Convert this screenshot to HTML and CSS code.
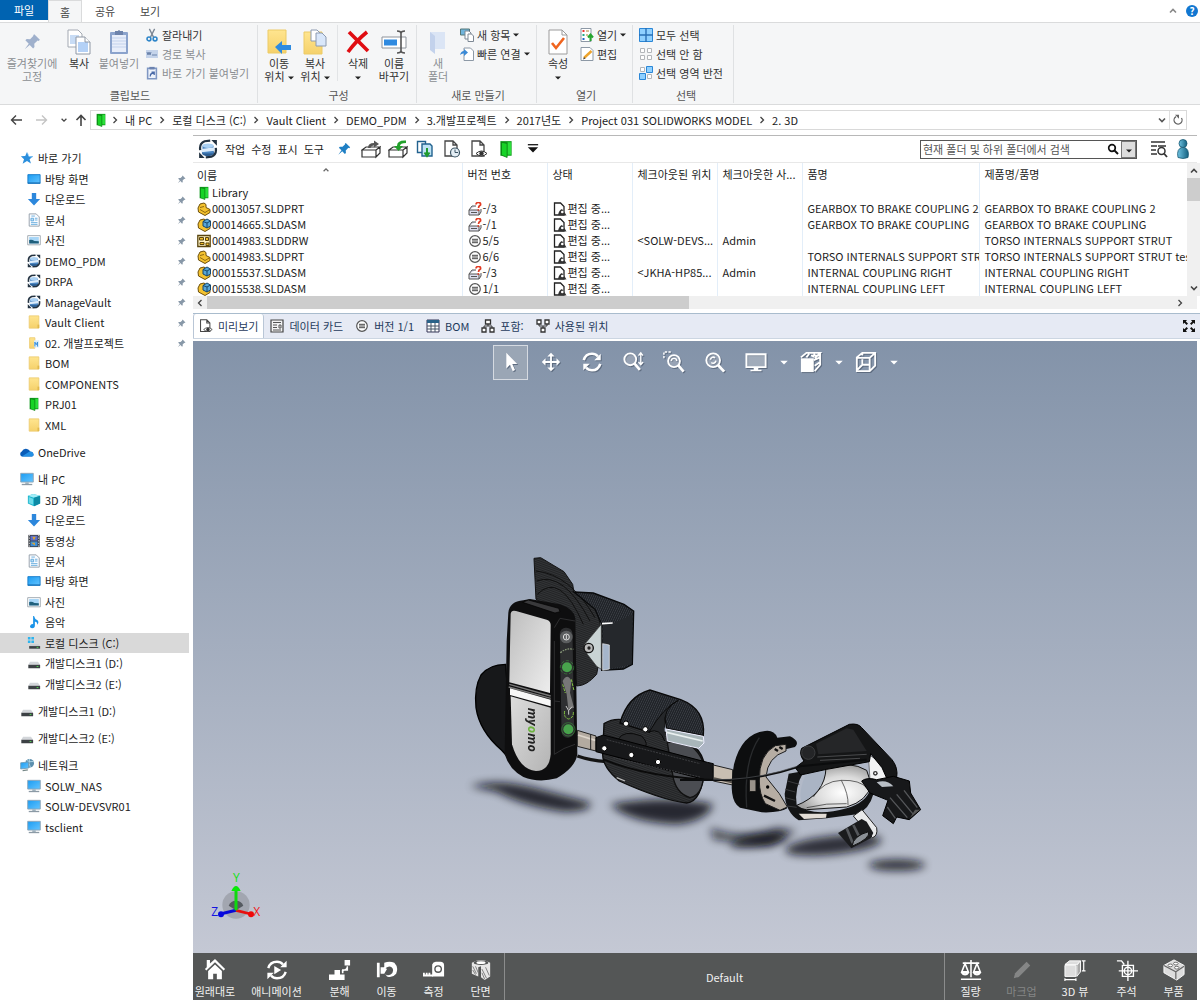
FILE: index.html
```html
<!DOCTYPE html>
<html lang="ko">
<head>
<meta charset="utf-8">
<title>2. 3D</title>
<link rel="stylesheet" href="styles.css">
</head>
<body>
<svg class="sprite" aria-hidden="true">
  <defs>
    <linearGradient id="sky" x1="0" y1="0" x2="1" y2="1"><stop offset="0" stop-color="#1b9cf2"/><stop offset="1" stop-color="#64c4ff"/></linearGradient>
    <linearGradient id="fold" x1="0" y1="0" x2="0" y2="1"><stop offset="0" stop-color="#ffe58f"/><stop offset="1" stop-color="#f5d16b"/></linearGradient>
    <linearGradient id="person" x1="0" y1="0" x2="1" y2="0"><stop offset="0" stop-color="#6fc3e2"/><stop offset="1" stop-color="#14607f"/></linearGradient>
  </defs>
  <symbol id="pin" viewBox="0 0 16 16"><path d="M10 1l5 5-1 1-1-.4-3 3 .2 2.9-1.2 1.2-3-3L1.500 14.500l3.600-5-3-3 1.200-1.200 3 .200 3-3L9 2z" fill="currentColor"/></symbol>
  <symbol id="copy" viewBox="0 0 24 26"><path d="M1 1h10l4 4v13H1z" fill="#fff" stroke="#a3a9b2"/><path d="M3 6h9v9H3z" fill="#c8dcf5"/><path d="M9 8h9l5 5v12H9z" fill="#fff" stroke="#8f98a5"/><path d="M11 13h10v10H11z" fill="#b4d1f6"/><path d="M18 8v5h5" fill="#fff" stroke="#8f98a5"/></symbol>
  <symbol id="paste" viewBox="0 0 20 26"><rect x="1" y="3" width="18" height="22" rx="1" fill="#8ba3cc"/><path d="M3 6h14v17H3z" fill="#e8eefa"/><path d="M3 9h14M3 12h14M3 15h14M3 18h14" stroke="#c3d2ec"/><path d="M6 2h3q1-2 2 0h3v4H6z" fill="#6d83ab"/></symbol>
  <symbol id="cut" viewBox="0 0 14 16"><path d="M4 1l5 10M10 1L5 11" stroke="#7b8794" stroke-width="1.500" fill="none"/><circle cx="3.500" cy="12.500" r="2.200" fill="none" stroke="#2f86c9" stroke-width="1.800"/><circle cx="10.500" cy="12.500" r="2.200" fill="none" stroke="#2f86c9" stroke-width="1.800"/></symbol>
  <symbol id="path" viewBox="0 0 14 14"><path d="M1 3h12v8H1z" fill="#c4d3ea"/><path d="M2 5l1 3 1-3 1 3 1-3M7 8h5" stroke="#6b83ab" fill="none"/></symbol>
  <symbol id="lnkpaste" viewBox="0 0 14 16"><path d="M2 2.500h10v12H2z" fill="#eef3fb" stroke="#7f97c3" stroke-width="1.800"/><path d="M4 1h6v3H4z" fill="#6c83b0"/><path d="M5 12q0-4 4-4M6.500 7H9.500v3.200" stroke="#4a6ba8" stroke-width="1.500" fill="none"/></symbol>
  <symbol id="moveto" viewBox="0 0 24 26"><path d="M1 1h18v23H1z" fill="url(#fold)" stroke="#eccb66"/><path d="M8 18l7-6v4h9v5h-9v4z" fill="#2e8be0"/></symbol>
  <symbol id="copyto" viewBox="0 0 24 26"><path d="M1 3h18v22H1z" fill="url(#fold)" stroke="#eccb66"/><path d="M8 1h6l3 3v8H8z" fill="#fff" stroke="#8c9ab0"/><path d="M13 4h6l4 4v9H13z" fill="#d9e7fa" stroke="#8c9ab0"/></symbol>
  <symbol id="del" viewBox="0 0 24 26"><path d="M3 3q9 9 19 19M21 3Q10 12 2 23" stroke="#e00d12" stroke-width="3.600" fill="none"/></symbol>
  <symbol id="rename" viewBox="0 0 26 26"><path d="M1 8h24v11H1z" fill="#fff" stroke="#8d939b"/><path d="M3 10.500h13v6H3z" fill="#2f8ae0"/><path d="M16 2q4 0 4 2.500v17q0 2.500-4 2.500M24 2q-4 0-4 2.500M24 24q-4 0-4-2.500" fill="none" stroke="#555" stroke-width="1.600"/></symbol>
  <symbol id="newfolder" viewBox="0 0 18 26"><path d="M1 3h15v17H1z" fill="#dbe5f5"/><path d="M1 3l5 4v18l-5-4z" fill="#c3d2ec"/></symbol>
  <symbol id="newitem" viewBox="0 0 14 14"><path d="M.5 1h9v6h-9z" fill="#6fb4dc" stroke="#577"/><path d="M5 3h4l2 2v6H5z" fill="#fff" stroke="#7d8894"/><path d="M8 6h3.500l2 2v5.500H8z" fill="#fff" stroke="#7d8894"/></symbol>
  <symbol id="quick" viewBox="0 0 14 14"><path d="M4 1h6.500l3 3v9.500H4z" fill="#fff" stroke="#8d99a6"/><path d="M0 8q1-4 4-4V2l4 3.500L4 9V6.500Q2 6 0 8z" fill="#3b8ad6"/></symbol>
  <symbol id="props" viewBox="0 0 20 26"><path d="M1 1h13l5 5v19H1z" fill="#fff" stroke="#9b9b9b"/><path d="M14 1v5h5" fill="none" stroke="#9b9b9b"/><path d="M4 14l4 5 8-10" stroke="#f0641e" stroke-width="2.600" fill="none"/></symbol>
  <symbol id="open" viewBox="0 0 14 14"><path d="M1 .5h10v13H1z" fill="#fff" stroke="#8d99a6"/><path d="M2.500 2h2v2h-2z" fill="#e33"/><path d="M2.500 6h2v2h-2z" fill="#2a8"/><path d="M2.500 10h2v2h-2z" fill="#26c"/><path d="M6 3h3M6 7h2" stroke="#b08030"/><path d="M10.500 13V7M8 9.500L10.500 6.500 13 9.500" stroke="#25a52e" stroke-width="2" fill="none"/></symbol>
  <symbol id="edit" viewBox="0 0 14 14"><path d="M1 .5h9l3 3v10H1z" fill="#fff" stroke="#8d99a6"/><path d="M4 11L11.500 4" stroke="#eca32c" stroke-width="2.400"/><path d="M3 12.500l1-2.500 1.500 1.500z" fill="#444"/></symbol>
  <symbol id="selall" viewBox="0 0 14 14"><path d="M.5 .5h13v13H.5z" fill="#8fd0ff" stroke="#2a86d6"/><path d="M7 0v14M0 7h14" stroke="#2a6fb5" stroke-width="1.400"/></symbol>
  <symbol id="selnone" viewBox="0 0 14 14"><path d="M1.500 1.500h4v4h-4zM8.500 1.500h4v4h-4zM1.500 8.500h4v4h-4zM8.500 8.500h4v4h-4z" fill="#fff" stroke="#b3b6ba"/></symbol>
  <symbol id="selinv" viewBox="0 0 14 14"><path d="M1.500 1.500h4v4h-4zM8.500 8.500h4v4h-4z" fill="#fff" stroke="#b3b6ba"/><path d="M7.500 .5h6v6h-6zM.5 7.500h6v6h-6z" fill="#8fd0ff" stroke="#2a86d6"/></symbol>
  <symbol id="chev-r" viewBox="0 0 6 8"><path d="M1.500 1l3 3-3 3" fill="none" stroke="currentColor" stroke-width="1.300"/></symbol>
  <symbol id="chev-d" viewBox="0 0 10 10"><path d="M2 3.500l3 3 3-3" fill="none" stroke="currentColor" stroke-width="1.600"/></symbol>
  <symbol id="chev-u" viewBox="0 0 10 10"><path d="M2 6.500l3-3 3 3" fill="none" stroke="currentColor" stroke-width="1.600"/></symbol>
  <symbol id="arr-l" viewBox="0 0 12 12"><path d="M6 1.500L1.500 6 6 10.500M1.500 6H12" fill="none" stroke="currentColor" stroke-width="1.400"/></symbol>
  <symbol id="arr-r" viewBox="0 0 12 12"><path d="M6 1.500L10.500 6 6 10.500M10.500 6H0" fill="none" stroke="currentColor" stroke-width="1.400"/></symbol>
  <symbol id="arr-u" viewBox="0 0 12 12"><path d="M1.500 6L6 1.500 10.500 6M6 1.500V12" fill="none" stroke="currentColor" stroke-width="1.600"/></symbol>
  <symbol id="tri" viewBox="0 0 6 4"><path d="M0 .5h6L3 3.500z" fill="currentColor"/></symbol>
  <symbol id="reload" viewBox="0 0 12 12"><path d="M9.500 4A4 4 0 1 1 4 2.600" fill="none" stroke="#666" stroke-width="1.300"/><path d="M3 .8h4v4z" fill="#666"/></symbol>
  <symbol id="greenf" viewBox="0 0 14 16"><path d="M2 1h10v13H2z" fill="#0f9a1b"/><path d="M3 2l5 1v12.500l-5-2z" fill="#17d326" stroke="#0a7a12" stroke-width=".7"/><path d="M8.500 2h3v11h-3z" fill="#2be03a"/></symbol>
  <symbol id="star" viewBox="0 0 16 16"><path d="M8 1l2 4.800 5 .200-4 3.300 1.500 5L8 11.500l-5 3 1.600-5L1 6l5-.2z" fill="#2b8fdd"/><path d="M9 3l1 3 4 1" stroke="#9bd2fb" fill="none"/></symbol>
  <symbol id="desk" viewBox="0 0 16 16"><path d="M1 3h14v10H1z" fill="url(#sky)" stroke="#1479c8"/><path d="M1 12.500h14" stroke="#1367ad"/></symbol>
  <symbol id="down" viewBox="0 0 16 16"><path d="M5.500 1h5v7H15l-7 7.500L1 8h4.500z" fill="#2c87dc"/></symbol>
  <symbol id="doc" viewBox="0 0 16 16"><path d="M2.500 1h8l3.500 3.500V15h-11.500z" fill="#fafcff" stroke="#8e99a5"/><path d="M4.500 6h3v3h-3zM9 6h3M9 8h3M4.500 11h7.500M4.500 13h7.500M5 3.500h4" stroke="#5fa8dc" fill="#bfe0f7"/></symbol>
  <symbol id="pic" viewBox="0 0 16 16"><path d="M.8 3h14.400v10.500H.8z" fill="#fff" stroke="#9aa3ac"/><path d="M2.500 4.500h11v7.500h-11z" fill="#a8d6f7"/><path d="M2.500 8q3-1 6 1l5 .5V12h-11z" fill="#1f5f7c"/></symbol>
  <symbol id="vault" viewBox="0 0 18 18"><ellipse cx="9" cy="12.500" rx="5.500" ry="3" fill="#2d5f94"/><path d="M4 6h10v7H4z" fill="#4b86c2"/><ellipse cx="9" cy="6" rx="5" ry="2" fill="#a9d0f3"/><path d="M3 9l12-1.500v3L3 12z" fill="#dcecfb"/><path d="M2 10Q1 4 6 2l5-.5M16 8q1 6-4 8l-5 .5" fill="none" stroke="#233241" stroke-width="2"/><path d="M12 1h5v5zM6 17H1v-5z" fill="#233241"/></symbol>
  <symbol id="folder" viewBox="0 0 16 16"><path d="M2.500 1h11v14h-11z" fill="url(#fold)" stroke="#edcd72"/><path d="M12 11h2v4h-2z" fill="#e2b94a"/></symbol>
  <symbol id="folderm" viewBox="0 0 16 16"><path d="M3 2h6v12H3z" fill="url(#fold)" stroke="#edcd72"/><path d="M8 5h6v8H8z" fill="#d6ecfb"/><path d="M9 12V7l1.500 3L12 7v5" stroke="#2a86d6" fill="none"/></symbol>
  <symbol id="cloud" viewBox="0 0 16 16"><path d="M2 13a3 3 0 0 1 0-5.500Q4 3.500 8 4.500q3 .5 3.500 3Q15 7.500 15.500 11q0 2-2 2z" fill="#0a5cb8"/><path d="M2 13l9-5.500q4 0 4.500 3.500 0 2-2 2z" fill="#2590e4"/></symbol>
  <symbol id="pc" viewBox="0 0 16 16"><path d="M.8 1.500h14.400v10H.8z" fill="url(#sky)" stroke="#8fa4b3"/><path d="M6 12h4v1.500H6z" fill="#8fa4b3"/><path d="M2 14.300h12" stroke="#8c9aa5" stroke-width="1.500"/></symbol>
  <symbol id="cube" viewBox="0 0 16 16"><path d="M1 3l6-2 8 2v9l-7 3-7-3z" fill="#1fb6cd"/><path d="M1 3l7 2.500 7-2.500-8-2z" fill="#a3edf7"/><path d="M8 5.500V15l7-3V3z" fill="#0d8aa5"/><path d="M2 4.500l5 2v7l-5-2z" fill="#6fdbe9"/></symbol>
  <symbol id="film" viewBox="0 0 16 16"><path d="M1.500 1h13v14h-13z" fill="#3b3f46"/><path d="M4 2h8v5.500H4z" fill="#5a6fd0"/><path d="M4 8.500h8V14H4z" fill="#3f8ed8"/><path d="M6 3h4l-2 4zM5 10h4v3z" fill="#e0a630"/><path d="M2.700 1v14M13.300 1v14" stroke="#ddd" stroke-dasharray="1.500 1.500"/></symbol>
  <symbol id="note" viewBox="0 0 16 16"><path d="M8 1q1 4 4 5 2 2 0 5 0-3-3-3.500V12q0 3-3 3-3-.2-2.500-2.500Q4.500 10 7 10.500V1z" fill="#1a93e8"/></symbol>
  <symbol id="windisk" viewBox="0 0 16 16"><path d="M1 1h3v3H1zM5 1h3v3H5zM1 5h3v3H1zM5 5h3v3H5z" fill="#2eb4ee"/><path d="M4 9.500h9l2 2H2.500z" fill="#c9ccd0"/><path d="M2.500 11.500H15v3H2.500z" fill="#3d4145"/><path d="M11 13h2" stroke="#4fe04f"/></symbol>
  <symbol id="disk" viewBox="0 0 16 16"><path d="M3.500 6.500h9l2.500 3.500H1.500z" fill="#d3d6da"/><path d="M1.500 10H15v4H1.500z" fill="#3d4145"/><path d="M11 12h2" stroke="#4fe04f"/></symbol>
  <symbol id="net" viewBox="0 0 16 16"><circle cx="11" cy="6" r="5" fill="#5c8fae"/><path d="M8 3q3 2 7 1M11 1q-2 5 1 10" stroke="#b9dcec" fill="none"/><path d="M.8 5.500l9-1v7l-9 1z" fill="url(#sky)" stroke="#6f9db8"/><path d="M3 14.500l6-1" stroke="#788" stroke-width="1.500"/></symbol>
  <symbol id="tray-out" viewBox="0 0 20 18"><path d="M1 10l4-3h14l-4 3zM1 10v7h14v-7zM15 10l4-3v6l-4 4z" fill="#fff" stroke="#333" stroke-width="1.200"/><path d="M7 8Q7 3 13 3V.5L18 4l-5 3.500V5.500Q10 5.500 9.500 8z" fill="#555"/></symbol>
  <symbol id="tray-in" viewBox="0 0 20 18"><path d="M1 10l4-3h14l-4 3zM1 10v7h14v-7zM15 10l4-3v6l-4 4z" fill="#fff" stroke="#333" stroke-width="1.200"/><path d="M18 .5Q9 0 9 6H6l4.500 5L15 6h-3q0-3 6-3z" fill="#22a02b"/></symbol>
  <symbol id="getver" viewBox="0 0 18 18"><path d="M1.500 1.500h8v11h-8z" fill="#fff" stroke="#22628f" stroke-width="1.400"/><path d="M6 4h8l2 2v10H6z" fill="#bfe3f5" stroke="#22628f" stroke-width="1.400"/><path d="M11 8v7M8.500 12.500L11 16l2.500-3.500" stroke="#1f9a2d" stroke-width="2" fill="none"/></symbol>
  <symbol id="hist" viewBox="0 0 18 18"><path d="M2 1h8l4 4v11H2zM10 1v4h4" fill="#fff" stroke="#444" stroke-width="1.300"/><circle cx="12" cy="12.500" r="4.500" fill="#e4eef5" stroke="#3c5566" stroke-width="1.200"/><path d="M12 9.500v3h3" stroke="#3c5566" fill="none"/></symbol>
  <symbol id="prev" viewBox="0 0 18 18"><path d="M2 1h8l4 4v11H2zM10 1v4h4" fill="#fff" stroke="#444" stroke-width="1.300"/><path d="M6 13.500q5.500-5 11 0-5.500 5-11 0z" fill="#fff" stroke="#333"/><circle cx="11.500" cy="13.500" r="2.200" fill="#333"/></symbol>
  <symbol id="menu-d" viewBox="0 0 14 12"><path d="M1 1h12" stroke="#111" stroke-width="1.500"/><path d="M1 4h12l-6 6z" fill="#111"/></symbol>
  <symbol id="mag" viewBox="0 0 12 12"><circle cx="5" cy="5" r="3.300" fill="none" stroke="#111" stroke-width="1.700"/><path d="M7.500 7.500L11 11" stroke="#111" stroke-width="2"/></symbol>
  <symbol id="listmag" viewBox="0 0 18 18"><path d="M1 2h14M1 6h6M1 10h5M1 14h6M8 6h8" stroke="#333" stroke-width="1.600"/><circle cx="11.500" cy="11" r="3.500" fill="none" stroke="#333" stroke-width="1.500"/><path d="M14 13.500l3 3.500" stroke="#333" stroke-width="1.800"/></symbol>
  <symbol id="user" viewBox="0 0 14 20"><path d="M2 18.500q-2-9 5-10.500 7 1.500 5 10.500-5 2-10 0z" fill="url(#person)" stroke="#185872" stroke-width=".8"/><circle cx="7" cy="4.500" r="4" fill="url(#person)" stroke="#185872" stroke-width=".8"/></symbol>
  <symbol id="prt" viewBox="0 0 14 14"><path d="M1 6l2-4 4-1 2 1.500v3L13 7.500v3L8 13.500 1.500 10z" fill="#f4c22f" stroke="#6e500a"/><path d="M3 5.500l4-1M3 7.500l5 3 5-3" stroke="#8d6a12" fill="none"/></symbol>
  <symbol id="asm" viewBox="0 0 14 14"><path d="M1 6l2-4 4-1 2 1.500v3L13 7.500v3L8 13.500 1.500 10z" fill="#f4c22f" stroke="#6e500a"/><path d="M6 3.500L10 1l3.500 2v5L10 10 6 8z" fill="#58a7d8" stroke="#15476d"/><path d="M6 3.500l4 1.500 3.500-2M10 5v5" stroke="#15476d" fill="none"/></symbol>
  <symbol id="drw" viewBox="0 0 14 14"><path d="M.8 1.500h12.400v11H.8z" fill="#fff3c4" stroke="#5a4610" stroke-width="1.300"/><path d="M2.500 3.500h4v2.500h-4zM8.500 3.500h3v3h-3zM3 8.500h4v2H3zM9 9h3v2.500H9z" fill="#f2bd2a" stroke="#5a4610"/></symbol>
  <symbol id="unk" viewBox="0 0 14 14"><path d="M1 8l3-4h4M1 8v5h10V8zM11 13l2-3V7" fill="#dde" stroke="#555"/><path d="M3 10.500h6" stroke="#555"/><path d="M8 2.500q0-2 2.500-2t2 2.500q-2 1-2 3M10.400 7.300v1.500" stroke="#e23a22" stroke-width="1.700" fill="none"/></symbol>
  <symbol id="eq" viewBox="0 0 14 14"><circle cx="7" cy="7" r="5.300" fill="#fff" stroke="#555" stroke-width="1.200"/><path d="M4 5.300h6M4 7h6M4 8.700h6" stroke="#444"/></symbol>
  <symbol id="state" viewBox="0 0 14 14"><path d="M1.500 1h6l3.500 3.500V13H1.500z" fill="#fff" stroke="#222" stroke-width="1.300"/><path d="M5 13q1-5 4-6l3 4 1.500 2.500z" fill="#333"/><circle cx="9.300" cy="10" r="1.300" fill="#fff"/></symbol>
  <symbol id="card" viewBox="0 0 14 14"><path d="M1 1h12v12H1z" fill="#f3f3f3" stroke="#444" stroke-width="1.200"/><path d="M3 3.500h8M3 6h4M3 8.500h4M3 11h8M9 6h2v3H9z" stroke="#555" fill="none"/></symbol>
  <symbol id="grid" viewBox="0 0 14 14"><path d="M1 1h12v12H1z" fill="#fff" stroke="#335" stroke-width="1"/><path d="M1 1h12v3H1z" fill="#2a6288"/><path d="M1 7h12M1 10h12M5 4v9M9 4v9" stroke="#456"/></symbol>
  <symbol id="contains" viewBox="0 0 14 14"><path d="M4.500 1h5v4h-5zM1 9h4v4H1zM9 9h4v4H9z" fill="#fff" stroke="#333" stroke-width="1.300"/><path d="M7 5v2M3 9V7h8v2" stroke="#333" fill="none"/></symbol>
  <symbol id="used" viewBox="0 0 14 14"><path d="M1 1h4v4H1zM9 1h4v4H9zM5 9h4v4H5z" fill="#fff" stroke="#333" stroke-width="1.300"/><path d="M3 5v2h8V5M7 7v2" stroke="#333" fill="none"/></symbol>
  <symbol id="expand" viewBox="0 0 14 14"><path d="M1 1h4L3.800 2.400 6 4.600 4.600 6 2.400 3.800 1 5zM13 1v4l-1.400-1.200L9.400 6 8 4.600l2.200-2.200L9 1zM1 13V9l1.400 1.200L4.600 8 6 9.400l-2.200 2.200L5 13zM13 13H9l1.200-1.400L8 9.400 9.400 8l2.200 2.200L13 9z" fill="#111"/></symbol>
  <symbol id="v-select" viewBox="0 0 24 24"><path d="M8 2v17l4-4 3 7 2.500-1.200-3-6.600h5.500z" fill="#fff"/></symbol>
  <symbol id="v-pan" viewBox="0 0 24 24"><path d="M12 2l4 4h-3v5h5V8l4 4-4 4v-3h-5v5h3l-4 4-4-4h3v-5H6v3l-4-4 4-4v3h5V6H8z" fill="#fff"/></symbol>
  <symbol id="v-rot" viewBox="0 0 24 24"><path d="M3 10Q5 3 12 3q4 0 6.500 3M21 14q-2 7-9 7-4 0-6.500-3" fill="none" stroke="#fff" stroke-width="2.800"/><path d="M21.500 3v7h-7zM2.500 21v-7h7z" fill="#fff"/></symbol>
  <symbol id="v-zoom" viewBox="0 0 24 24"><circle cx="9" cy="9" r="6.500" fill="#ffffff33" stroke="#fff" stroke-width="2"/><path d="M13.500 13.500l6 7" stroke="#fff" stroke-width="3"/><path d="M20.500 2v13M18 5l2.500-3L23 5M18 12l2.500 3 2.500-3" stroke="#fff" fill="none" stroke-width="1.500"/></symbol>
  <symbol id="v-area" viewBox="0 0 24 24"><path d="M1 8V1h9" stroke="#fff" stroke-width="1.600" stroke-dasharray="2.500 1.500" fill="none"/><circle cx="12" cy="11" r="6.500" fill="#ffffff33" stroke="#fff" stroke-width="2"/><path d="M16.500 15.500l6 7" stroke="#fff" stroke-width="3"/><path d="M9 11a3 3 0 0 1 6 0" stroke="#fff" stroke-width="1.500" fill="none"/></symbol>
  <symbol id="v-fit" viewBox="0 0 24 24"><circle cx="10" cy="10" r="7.500" fill="#ffffff33" stroke="#fff" stroke-width="2"/><path d="M15.500 15.500l6.500 7" stroke="#fff" stroke-width="3.200"/><path d="M7 9.500a3 3 0 0 1 5-2M13 10.500a3 3 0 0 1-5 2" stroke="#fff" stroke-width="1.700" fill="none"/></symbol>
  <symbol id="v-mon" viewBox="0 0 24 24"><path d="M1.500 3.500h21v14h-21z" fill="#ffffff4d" stroke="#fff" stroke-width="2"/><path d="M9.500 18h5v3h-5zM6 20.500h12V22H6z" fill="#fff"/></symbol>
  <symbol id="v-sec" viewBox="0 0 24 24"><path d="M1 8h14v15H1z" fill="#fff"/><path d="M1 7l6-5h15l-6 6M22 2v13l-6 7M10 3l-3 4M16 3l-2 4M12 5h9M15 10l7-3M16 16l6-4" stroke="#fff" stroke-width="2" fill="none"/></symbol>
  <symbol id="v-cube" viewBox="0 0 24 24"><path d="M2 7l6-5h14v14l-6 6H2zM2 7.500h14V22M16 7.500L22 2M8 2v3M8 9v6l-5 5M9 15h6" stroke="#fff" stroke-width="2" fill="none"/></symbol>
  <symbol id="b-home" viewBox="0 0 24 24"><path d="M3 1h3.500v4L12 0l11 11-1.600 1.600L12 3.500l-9.400 9L1 11l2-2z" fill="#fff"/><path d="M4.500 13L12 6l7.500 7v9H14v-6h-4v6H4.500z" fill="#fff"/></symbol>
  <symbol id="b-anim" viewBox="0 0 24 24"><path d="M2.500 10Q4.500 3 12 3q4 0 6.500 3M21.500 14q-2 7-9.500 7-4 0-6.500-3" fill="none" stroke="#fff" stroke-width="2.600"/><path d="M22.500 2v7h-7zM1.500 22v-7h7z" fill="#fff"/><path d="M9 7.500l7.500 4.500L9 16.500z" fill="#fff"/></symbol>
  <symbol id="b-expl" viewBox="0 0 24 24"><path d="M17 1h6v6h-6zM0 17h6v-5h6v5h5v6H0zM20 8.500V12h-6v3" fill="#fff"/><path d="M20 8v4h-5v3.500" stroke="#fff" stroke-width="1.600" fill="none"/></symbol>
  <symbol id="b-move" viewBox="0 0 24 24"><path d="M1 4h3v16H1zM5 9h4l3 2-3 5H5zM9 4q6-2 11 0 5 5 2 12-4 5-10 3l-2-3q2 3 6 1 4-3 2-7-2-3-6-1l-3 2z" fill="#fff"/></symbol>
  <symbol id="b-meas" viewBox="0 0 24 24"><path d="M10 6q1-3 4-3h5q4 0 4 4v12H10z" fill="#fff"/><circle cx="16.500" cy="11" r="3.500" fill="none" stroke="#545656" stroke-width="1.500"/><path d="M1 15v3h10M4 15v2M7 15v2" stroke="#fff" stroke-width="2" fill="none"/></symbol>
  <symbol id="b-sec" viewBox="0 0 24 24"><path d="M2 4q10-6 20 0v15l-6 4-4-3V8l-3 1v10l-7-3z" fill="#e6e6e6"/><ellipse cx="12" cy="4" rx="8" ry="2.500" fill="#545656"/><ellipse cx="12" cy="4" rx="5" ry="1.500" fill="#fff"/><path d="M3 8l4 8M3 12l3 5M6 8l3 7M13 11l5 10M13 15l3 7M17 9l4 9" stroke="#777"/></symbol>
  <symbol id="b-mass" viewBox="0 0 24 24"><path d="M12 1v19M3 4.500h18M2 15a4 4 0 0 0 7 0zM15 15a4 4 0 0 0 7 0zM5.500 5L2 14h7zM18.500 5L15 14h7zM1 22h22" stroke="#fff" stroke-width="1.700" fill="none"/></symbol>
  <symbol id="b-mark" viewBox="0 0 24 24"><path d="M3 21l1.500-5.500L17 3l4 4L8.500 19.500z" fill="#858686"/></symbol>
  <symbol id="b-3d" viewBox="0 0 24 24"><path d="M1 6l5-4h12l-4 4zM1 7h12v12H1z" fill="#ddd" stroke="#fff"/><path d="M14 7l4-5v12l-4 5z" fill="#a9a9a9" stroke="#fff"/><path d="M21.500 2v11M19.500 2h4M19.500 13h4M1 22.500h12M1 21v3M13 21v3" stroke="#fff" stroke-width="1.300"/></symbol>
  <symbol id="b-note" viewBox="0 0 24 24"><path d="M7 7h12v12H7zM13 2v22M3 13h21M1 2h5l3 4" stroke="#fff" stroke-width="1.500" fill="none"/><circle cx="13" cy="13" r="4" stroke="#fff" fill="none" stroke-width="1.500"/></symbol>
  <symbol id="b-part" viewBox="0 0 24 24"><path d="M1 7l11-6 11 6v10l-8 6L1 15z" fill="#ddd" stroke="#fff"/><path d="M1 7l13 7 9-6M14 14v8" stroke="#666" fill="none" stroke-width="1.300"/><ellipse cx="8" cy="7" rx="2.500" ry="1.500" fill="#fff" stroke="#666"/><ellipse cx="14" cy="5" rx="2.500" ry="1.500" fill="#fff" stroke="#666"/><ellipse cx="15" cy="9.500" rx="2.500" ry="1.500" fill="#fff" stroke="#666"/></symbol>
</svg>

<header>
  <nav class="tabs" aria-label="리본 탭">
    <button class="tab file">파일</button>
    <button class="tab current">홈</button>
    <button class="tab">공유</button>
    <button class="tab">보기</button>
    <span class="help"><svg class="i10"><use href="#chev-u"/></svg><span class="help-mark">?</span></span>
  </nav>
  <div class="ribbon">
    <section class="group g-clip">
      <div class="tools">
        <button class="big wide off"><svg class="i24 tint"><use href="#pin"/></svg>즐겨찾기에<br>고정</button>
        <button class="big"><svg class="i26"><use href="#copy"/></svg>복사</button>
        <button class="big mid off"><svg class="i26"><use href="#paste"/></svg>붙여넣기</button>
        <div class="stack">
          <button class="small"><svg class="i14"><use href="#cut"/></svg>잘라내기</button>
          <button class="small off"><svg class="i14"><use href="#path"/></svg>경로 복사</button>
          <button class="small off"><svg class="i14"><use href="#lnkpaste"/></svg>바로 가기 붙여넣기</button>
        </div>
      </div>
      <h2>클립보드</h2>
    </section>
    <section class="group g-org">
      <div class="tools">
        <button class="big"><svg class="i26"><use href="#moveto"/></svg>이동<br>위치 <svg class="tri"><use href="#tri"/></svg></button>
        <button class="big"><svg class="i26"><use href="#copyto"/></svg>복사<br>위치 <svg class="tri"><use href="#tri"/></svg></button>
        <i class="rule"></i>
        <button class="big"><svg class="i26"><use href="#del"/></svg>삭제<br><svg class="tri"><use href="#tri"/></svg></button>
        <button class="big"><svg class="i26"><use href="#rename"/></svg>이름<br>바꾸기</button>
      </div>
      <h2>구성</h2>
    </section>
    <section class="group g-new">
      <div class="tools">
        <button class="big off"><svg class="i26"><use href="#newfolder"/></svg>새<br>폴더</button>
        <div class="stack">
          <button class="small"><svg class="i14"><use href="#newitem"/></svg>새 항목 <svg class="tri"><use href="#tri"/></svg></button>
          <button class="small"><svg class="i14"><use href="#quick"/></svg>빠른 연결 <svg class="tri"><use href="#tri"/></svg></button>
        </div>
      </div>
      <h2>새로 만들기</h2>
    </section>
    <section class="group g-open">
      <div class="tools">
        <button class="big"><svg class="i26"><use href="#props"/></svg>속성<br><svg class="tri"><use href="#tri"/></svg></button>
        <div class="stack">
          <button class="small"><svg class="i14"><use href="#open"/></svg>열기 <svg class="tri"><use href="#tri"/></svg></button>
          <button class="small"><svg class="i14"><use href="#edit"/></svg>편집</button>
        </div>
      </div>
      <h2>열기</h2>
    </section>
    <section class="group g-sel">
      <div class="tools">
        <div class="stack">
          <button class="small"><svg class="i14"><use href="#selall"/></svg>모두 선택</button>
          <button class="small"><svg class="i14"><use href="#selnone"/></svg>선택 안 함</button>
          <button class="small"><svg class="i14"><use href="#selinv"/></svg>선택 영역 반전</button>
        </div>
      </div>
      <h2>선택</h2>
    </section>
  </div>
  <div class="address">
    <div class="history">
      <button aria-label="뒤로"><svg class="i12"><use href="#arr-l"/></svg></button>
      <button aria-label="앞으로" class="faint"><svg class="i12"><use href="#arr-r"/></svg></button>
      <button aria-label="최근 위치" class="slim"><svg class="i8"><use href="#chev-d"/></svg></button>
      <button aria-label="위로" class="slim"><svg class="i12"><use href="#arr-u"/></svg></button>
    </div>
    <nav class="crumbs" aria-label="주소">
      <svg class="i14"><use href="#greenf"/></svg>
      <svg class="sep"><use href="#chev-r"/></svg><a href="#">내 PC</a>
      <svg class="sep"><use href="#chev-r"/></svg><a href="#">로컬 디스크 (C:)</a>
      <svg class="sep"><use href="#chev-r"/></svg><a href="#">Vault Client</a>
      <svg class="sep"><use href="#chev-r"/></svg><a href="#">DEMO_PDM</a>
      <svg class="sep"><use href="#chev-r"/></svg><a href="#">3.개발프로젝트</a>
      <svg class="sep"><use href="#chev-r"/></svg><a href="#">2017년도</a>
      <svg class="sep"><use href="#chev-r"/></svg><a href="#">Project 031 SOLIDWORKS MODEL</a>
      <svg class="sep"><use href="#chev-r"/></svg><a href="#">2. 3D</a>
      <span class="crumb-end"><svg class="i10"><use href="#chev-d"/></svg><i></i><svg class="i12"><use href="#reload"/></svg></span>
    </nav>
  </div>
</header>

<div class="body">
  <aside class="side">
    <ul class="rows14">
      <li class="top"><svg><use href="#star"/></svg>바로 가기</li>
      <li><svg><use href="#desk"/></svg>바탕 화면<svg class="pin"><use href="#pin"/></svg></li>
      <li><svg><use href="#down"/></svg>다운로드<svg class="pin"><use href="#pin"/></svg></li>
      <li><svg><use href="#doc"/></svg>문서<svg class="pin"><use href="#pin"/></svg></li>
      <li><svg><use href="#pic"/></svg>사진<svg class="pin"><use href="#pin"/></svg></li>
      <li><svg><use href="#vault"/></svg>DEMO_PDM<svg class="pin"><use href="#pin"/></svg></li>
      <li><svg><use href="#vault"/></svg>DRPA<svg class="pin"><use href="#pin"/></svg></li>
      <li><svg><use href="#vault"/></svg>ManageVault<svg class="pin"><use href="#pin"/></svg></li>
      <li><svg><use href="#folder"/></svg>Vault Client<svg class="pin"><use href="#pin"/></svg></li>
      <li><svg><use href="#folderm"/></svg>02. 개발프로젝트<svg class="pin"><use href="#pin"/></svg></li>
      <li><svg><use href="#folder"/></svg>BOM</li>
      <li><svg><use href="#folder"/></svg>COMPONENTS</li>
      <li><svg><use href="#greenf"/></svg>PRJ01</li>
      <li><svg><use href="#folder"/></svg>XML</li>
    </ul>
    <ul class="rows1"><li class="top"><svg><use href="#cloud"/></svg>OneDrive</li></ul>
    <ul class="rows11">
      <li class="top"><svg><use href="#pc"/></svg>내 PC</li>
      <li><svg><use href="#cube"/></svg>3D 개체</li>
      <li><svg><use href="#down"/></svg>다운로드</li>
      <li><svg><use href="#film"/></svg>동영상</li>
      <li><svg><use href="#doc"/></svg>문서</li>
      <li><svg><use href="#desk"/></svg>바탕 화면</li>
      <li><svg><use href="#pic"/></svg>사진</li>
      <li><svg><use href="#note"/></svg>음악</li>
      <li class="selected"><svg><use href="#windisk"/></svg>로컬 디스크 (C:)</li>
      <li><svg><use href="#disk"/></svg>개발디스크1 (D:)</li>
      <li><svg><use href="#disk"/></svg>개발디스크2 (E:)</li>
    </ul>
    <ul class="rows1"><li class="top"><svg><use href="#disk"/></svg>개발디스크1 (D:)</li></ul>
    <ul class="rows1"><li class="top"><svg><use href="#disk"/></svg>개발디스크2 (E:)</li></ul>
    <ul class="rows4">
      <li class="top"><svg><use href="#net"/></svg>네트워크</li>
      <li><svg><use href="#pc"/></svg>SOLW_NAS</li>
      <li><svg><use href="#pc"/></svg>SOLW-DEVSVR01</li>
      <li><svg><use href="#pc"/></svg>tsclient</li>
    </ul>
  </aside>

  <main>
    <div class="pdm">
      <svg class="i20 logo"><use href="#vault"/></svg>
      <button>작업</button><button>수정</button><button>표시</button><button>도구</button>
      <div class="pdm-icons">
        <button aria-label="고정"><svg class="i14 blue"><use href="#pin"/></svg></button>
        <button aria-label="체크 아웃"><svg class="i20"><use href="#tray-out"/></svg></button>
        <button aria-label="체크 인"><svg class="i20"><use href="#tray-in"/></svg></button>
        <button aria-label="버전 가져오기"><svg class="i18"><use href="#getver"/></svg></button>
        <button aria-label="기록"><svg class="i18"><use href="#hist"/></svg></button>
        <button aria-label="미리보기"><svg class="i18"><use href="#prev"/></svg></button>
        <button aria-label="폴더"><svg class="i18"><use href="#greenf"/></svg></button>
        <button aria-label="더 보기"><svg class="i12"><use href="#menu-d"/></svg></button>
      </div>
      <form class="search">
        <input type="text" aria-label="검색" placeholder="현재 폴더 및 하위 폴더에서 검색">
        <svg class="i12"><use href="#mag"/></svg>
        <button type="button" aria-label="검색 옵션"><svg class="tri"><use href="#tri"/></svg></button>
      </form>
      <button class="end" aria-label="고급 검색"><svg class="i18"><use href="#listmag"/></svg></button>
      <button class="end" aria-label="사용자"><svg class="i20"><use href="#user"/></svg></button>
    </div>

    <div class="list">
      <div class="list-view">
        <table>
          <colgroup><col class="c-name"><col class="c-std"><col class="c-std"><col class="c-std"><col class="c-std"><col class="c-desc"><col></colgroup>
          <thead><tr><th>이름<svg class="sort"><use href="#chev-u"/></svg></th><th>버전 번호</th><th>상태</th><th>체크아웃된 위치</th><th>체크아웃한 사...</th><th>품명</th><th>제품명/품명</th></tr></thead>
          <tbody>
            <tr><td><svg><use href="#greenf"/></svg>Library</td><td></td><td></td><td></td><td></td><td></td><td></td></tr>
            <tr><td><svg><use href="#prt"/></svg>00013057.SLDPRT</td><td><svg><use href="#unk"/></svg>-/3</td><td><svg><use href="#state"/></svg>편집 중...</td><td></td><td></td><td>GEARBOX TO BRAKE COUPLING 2</td><td>GEARBOX TO BRAKE COUPLING 2</td></tr>
            <tr><td><svg><use href="#asm"/></svg>00014665.SLDASM</td><td><svg><use href="#unk"/></svg>-/1</td><td><svg><use href="#state"/></svg>편집 중...</td><td></td><td></td><td>GEARBOX TO BRAKE COUPLING</td><td>GEARBOX TO BRAKE COUPLING</td></tr>
            <tr><td><svg><use href="#drw"/></svg>00014983.SLDDRW</td><td><svg><use href="#eq"/></svg>5/5</td><td><svg><use href="#state"/></svg>편집 중...</td><td>&lt;SOLW-DEVS...</td><td>Admin</td><td></td><td>TORSO INTERNALS SUPPORT STRUT</td></tr>
            <tr><td><svg><use href="#prt"/></svg>00014983.SLDPRT</td><td><svg><use href="#eq"/></svg>6/6</td><td><svg><use href="#state"/></svg>편집 중...</td><td></td><td></td><td>TORSO INTERNALS SUPPORT STR...</td><td>TORSO INTERNALS SUPPORT STRUT test111</td></tr>
            <tr><td><svg><use href="#asm"/></svg>00015537.SLDASM</td><td><svg><use href="#unk"/></svg>-/3</td><td><svg><use href="#state"/></svg>편집 중...</td><td>&lt;JKHA-HP85...</td><td>Admin</td><td>INTERNAL COUPLING RIGHT</td><td>INTERNAL COUPLING RIGHT</td></tr>
            <tr><td><svg><use href="#asm"/></svg>00015538.SLDASM</td><td><svg><use href="#eq"/></svg>1/1</td><td><svg><use href="#state"/></svg>편집 중...</td><td></td><td></td><td>INTERNAL COUPLING LEFT</td><td>INTERNAL COUPLING LEFT</td></tr>
          </tbody>
        </table>
      </div>
      <div class="vbar"><svg class="i10"><use href="#chev-u"/></svg><i></i><svg class="i10 foot"><use href="#chev-d"/></svg></div>
    </div>
    <div class="hbar"><svg class="sep"><use href="#chev-r"/></svg><i></i><svg class="sep"><use href="#chev-r"/></svg></div>

    <div class="panels">
      <button class="active"><svg class="i14"><use href="#prev"/></svg>미리보기</button>
      <button><svg class="i14"><use href="#card"/></svg>데이터 카드</button>
      <button><svg class="i14"><use href="#eq"/></svg>버전 1/1</button>
      <button><svg class="i14"><use href="#grid"/></svg>BOM</button>
      <button><svg class="i14"><use href="#contains"/></svg>포함:</button>
      <button><svg class="i14"><use href="#used"/></svg>사용된 위치</button>
      <button class="full" aria-label="전체 화면"><svg class="i14"><use href="#expand"/></svg></button>
    </div>

    <section class="viewer">
      <div class="viewtools">
        <button class="picked" aria-label="선택"><svg><use href="#v-select"/></svg></button>
        <button aria-label="이동"><svg><use href="#v-pan"/></svg></button>
        <button aria-label="회전"><svg><use href="#v-rot"/></svg></button>
        <button aria-label="확대/축소"><svg><use href="#v-zoom"/></svg></button>
        <button aria-label="영역 확대"><svg><use href="#v-area"/></svg></button>
        <button aria-label="전체 보기"><svg><use href="#v-fit"/></svg></button>
        <button aria-label="표시"><svg><use href="#v-mon"/></svg></button><svg class="tri"><use href="#tri"/></svg>
        <button aria-label="뷰 방향"><svg><use href="#v-sec"/></svg></button><svg class="tri"><use href="#tri"/></svg>
        <button aria-label="표시 유형"><svg><use href="#v-cube"/></svg></button><svg class="tri"><use href="#tri"/></svg>
      </div>
      <svg class="model" viewBox="193 382 1004 570" preserveAspectRatio="xMinYMax meet" role="img" aria-label="3D 모델">
        <defs>
          <filter id="soft" x="-50%" y="-80%" width="200%" height="260%"><feGaussianBlur stdDeviation="13"/></filter>
          <pattern id="weave" width="6" height="6" patternUnits="userSpaceOnUse" patternTransform="rotate(20)"><rect width="6" height="6" fill="#232426"/><path d="M0 1h6" stroke="#4b4c4e" stroke-width="1.500"/></pattern>
          <pattern id="rib" width="6" height="6" patternUnits="userSpaceOnUse" patternTransform="rotate(-65)"><rect width="6" height="6" fill="#202328"/><path d="M0 1h6" stroke="#3b3f45" stroke-width="2"/></pattern>
          <linearGradient id="plate" x1="0" y1="0" x2="1" y2="1"><stop offset="0" stop-color="#bdbdbd"/><stop offset="1" stop-color="#ededed"/></linearGradient>
          <linearGradient id="plate2" x1="0" y1="0" x2="1" y2="1"><stop offset="0" stop-color="#dcdcdc"/><stop offset="1" stop-color="#b4b4b4"/></linearGradient>
          <radialGradient id="palm" cx=".62" cy=".62" r=".6"><stop offset="0" stop-color="#fff"/><stop offset=".6" stop-color="#dadada"/><stop offset="1" stop-color="#a2a2a2"/></radialGradient>
        </defs>
        <svg x="460" y="540" width="260" height="290" viewBox="0 0 780 870" overflow="visible">
          <g filter="url(#soft)" fill="#0b0f16" opacity=".85">
            <path d="M30 735Q110 712 220 740L390 785Q400 810 310 812Q190 795 110 752z"/>
            <path d="M450 790Q620 760 760 790Q740 840 650 850Q510 845 450 790z"/>
            <path d="M750 860Q860 900 950 860L1010 870L930 915L760 895z" opacity=".8"/>
          </g>
          <path d="M222 52L242 50L312 92L338 130L342 155Q395 180 412 215L430 290L410 400Q380 435 350 435L340 240L228 175z" fill="url(#weave)" stroke="#111" stroke-width="3"/>
          <path d="M232 160Q300 90 370 250M230 120Q310 90 390 240M228 90Q330 100 405 230" fill="none" stroke="#101010" stroke-width="3"/>
          <path d="M342 153L400 156L492 190L521 210L517 370L490 384L425 388L425 250L405 205z" fill="url(#rib)" stroke="#08090a" stroke-width="4"/>
          <path d="M430 250H456L518 220L515 370L446 384L428 384z" fill="#25282c"/>
          <path d="M426 248L458 246" stroke="#fff" stroke-width="5"/>
          <path d="M372 312L424 250V385L410 376L382 340z" fill="#c9d3d4" stroke="#333" stroke-width="2"/>
          <path d="M428 308L448 312V384L428 388z" fill="#a5b5ca" stroke="#eee" stroke-width="2"/>
          <circle cx="386" cy="321" r="14" fill="#bbb" stroke="#111" stroke-width="4"/><circle cx="387" cy="321" r="5" fill="#222"/>
          <path d="M137 370Q88 370 63 402Q42 440 48 500Q58 570 125 628L190 700L150 560z" fill="#17181a" stroke="#000" stroke-width="4"/>
          <path d="M145 215Q148 182 190 178L210 174L300 190Q342 204 346 232L352 640Q346 680 290 712Q235 726 190 708Q148 686 134 640L140 300z" fill="#0e0e0f"/>
          <path d="M188 184L205 177L296 202L300 212L285 216z" fill="#39393b" stroke="#000" stroke-width="2"/>
          <path d="M283 300V640Q310 620 345 610M283 480L300 482M283 260L300 232L345 240" fill="none" stroke="#2e2e30" stroke-width="3"/>
          <path d="M152 218Q154 206 168 210L260 236Q272 240 272 252L270 456L148 424z" fill="url(#plate)"/>
          <path d="M148 430L272 465M146 438L272 472" stroke="#777" stroke-width="4"/>
          <path d="M150 442L272 476V496L150 462z" fill="#f7f7f7"/>
          <path d="M152 466L272 500V640Q268 690 228 690Q178 686 156 610z" fill="url(#plate2)"/>
          <text class="brand" transform="translate(205 500) rotate(90)">my<tspan class="brand-o">o</tspan>mo</text>
          <rect x="302" y="260" width="38" height="330" rx="18" fill="#2e2f31" transform="rotate(-1 320 425)"/>
          <circle cx="319" cy="288" r="19" fill="#5b5d5f"/><circle cx="319" cy="288" r="9" fill="none" stroke="#ddd" stroke-width="3"/><path d="M319 281V295" stroke="#ddd" stroke-width="3"/>
          <path d="M301 335Q320 320 340 325" stroke="#8a9a7a" stroke-width="4" fill="none" stroke-dasharray="5 3"/>
          <circle cx="321" cy="379" r="20" fill="none" stroke="#3b8b3d" stroke-width="2" stroke-dasharray="10 5"/><circle cx="321" cy="379" r="15" fill="#48a34c"/>
          <path d="M308 420Q322 395 334 420L330 455L342 500L325 505L320 460z" fill="#777"/>
          <path d="M308 430l8 26M334 415l8 34M314 510q-4 20 12 24 16-4 14-24" fill="none" stroke="#83c341" stroke-width="3" stroke-dasharray="9 3"/>
          <path d="M318 495l8 14 10-12M326 509v12" stroke="#ccc" stroke-width="3" fill="none"/>
          <circle cx="325" cy="565" r="20" fill="none" stroke="#3b8b3d" stroke-width="2"/><circle cx="325" cy="565" r="15" fill="#48a34c"/>
          <path d="M352 568L408 585V630L352 616z" fill="#b3aaa0" stroke="#222" stroke-width="3"/><path d="M354 582L406 598" stroke="#ddd5cb" stroke-width="5"/><path d="M392 580V626" stroke="#222" stroke-width="3"/>
          <path d="M352 645Q390 658 440 662" stroke="#141414" stroke-width="10" fill="none"/>
          <path d="M432 548Q470 524 520 545L600 570Q730 600 734 680Q726 782 680 786Q600 776 478 720Q428 680 428 640z" fill="url(#weave)" stroke="#0c0c0c" stroke-width="4"/>
          <path d="M622 605Q700 590 730 665Q738 760 690 770Q645 755 638 700z" fill="#4b4d52" stroke="#111" stroke-width="4"/>
          <path d="M475 595Q490 565 545 585Q570 610 550 625z" fill="#28292b" stroke="#0a0a0a" stroke-width="3"/>
          <path d="M408 590L430 582L742 664L760 668L758 716L735 716L408 632z" fill="#17181a" stroke="#000" stroke-width="3"/>
          <path d="M440 596L720 668M460 650L720 708" stroke="#3c3d40" stroke-width="3" stroke-dasharray="6 3"/>
          <path d="M430 655Q560 710 780 718" stroke="#0b0b0b" stroke-width="6" fill="none"/>
          <path d="M480 546L568 574Q590 545 614 528L620 562L730 584Q738 505 662 476L570 447Q502 466 480 546z" fill="url(#rib)" stroke="#090909" stroke-width="4"/>
          <path d="M614 560Q608 500 655 478Q610 500 568 572Q600 560 614 600" fill="#25272a" stroke="#0a0a0a" stroke-width="3"/>
          <path d="M618 564L730 586L732 606L716 622L622 600z" fill="#a9b6ba" stroke="#eef" stroke-width="3"/><path d="M620 574L728 600" stroke="#e9f0f0" stroke-width="5"/>
          <g fill="#fff" stroke="#000" stroke-width="3"><circle cx="433" cy="622" r="8"/><circle cx="514" cy="642" r="8"/><circle cx="594" cy="663" r="8"/><circle cx="498" cy="548" r="8"/><circle cx="556" cy="565" r="8"/></g>
          <path d="M470 710l25 10" stroke="#bbb" stroke-width="4"/>
        </svg>
        <svg x="680" y="700" width="270" height="190" viewBox="0 0 810 570" overflow="visible">
          <g filter="url(#soft)" fill="#0b0f16" opacity=".8">
            <ellipse cx="235" cy="418" rx="85" ry="18" transform="rotate(-8 235 418)"/>
            <ellipse cx="460" cy="432" rx="145" ry="28" transform="rotate(-6 460 432)"/>
            <ellipse cx="650" cy="492" rx="85" ry="17"/>
          </g>
          <path d="M100 192L158 206V252L100 240z" fill="#c8beb2" stroke="#222" stroke-width="3"/><path d="M102 232L156 244" stroke="#55504a" stroke-width="6"/>
          <path d="M255 90Q185 98 162 190Q142 300 180 320L245 334Q300 336 322 322L300 300Q252 300 248 230Q262 160 310 146L345 138Q362 122 330 106L292 110Q282 86 255 90z" fill="#0d0e0f"/>
          <path d="M238 110Q190 180 200 320" stroke="#292b2d" stroke-width="4" fill="none"/>
          <path d="M238 240Q236 160 286 134L318 130V150Q262 168 258 228L298 278L322 318L300 328L256 308Q238 280 238 240z" fill="#b6ada3" stroke="#1c1c1c" stroke-width="3"/>
          <circle cx="263" cy="258" r="5"/><path d="M252 284L285 300M284 144l10 6M298 138l10 6" stroke="#111" stroke-width="7"/>
          <path d="M208 236H228V272H208z" fill="#99928a" stroke="#111" stroke-width="3"/>
          <path d="M375 225Q405 200 438 200Q440 275 380 318Q345 300 375 225z" fill="#aab4c4"/>
          <path d="M438 200Q510 178 560 208L574 250Q562 300 500 318L380 326Q352 322 348 314Q436 280 438 200z" fill="url(#palm)" stroke="#111" stroke-width="3"/>
          <path d="M400 288Q430 240 484 238Q540 236 562 262M484 238Q506 280 504 312M380 320Q440 305 500 308" fill="none" stroke="#222" stroke-width="2"/>
          <path d="M326 218L372 210Q342 262 350 312Q400 350 500 322Q560 305 572 262L580 280Q568 325 530 340L440 352L356 358Q316 332 314 278z" fill="#131415"/>
          <path d="M356 338L440 338L438 350L372 354z" fill="#e3ddd6"/>
          <path d="M322 240l36 10M316 265l30 8M316 290l30 8M322 315l28 4" stroke="#3a3b3d" stroke-width="3"/>
          <path d="M565 160Q600 180 628 226L600 242L570 236z" fill="#f2f3f4" stroke="#444" stroke-width="2"/><circle cx="586" cy="217" r="7" fill="#333"/><circle cx="586" cy="217" r="3" fill="#fff"/>
          <path d="M365 142L508 70Q535 66 545 80L636 176Q655 200 650 230L622 236L606 200L572 158L568 182L440 205L362 222L346 200L372 180Q356 160 365 142z" fill="#151617" stroke="#000" stroke-width="3"/>
          <path d="M408 128L500 82L520 86L560 150L415 160z" fill="#252628"/><circle cx="385" cy="155" r="20" fill="#242527" stroke="#3c3d3f" stroke-width="3"/>
          <path d="M412 168L560 160M420 178L540 172" stroke="#4a4b4d" stroke-width="3"/>
          <path d="M545 240Q560 228 590 236L640 226L688 240L692 276L722 326L688 356L650 348L640 368L608 344L624 298L570 276z" fill="#17181a" stroke="#000" stroke-width="3"/>
          <path d="M590 244Q620 234 640 256L606 258z" fill="#b9bfc6"/><path d="M630 290L682 350M650 280L700 340M672 268L712 320M622 318L646 352" stroke="#55575a" stroke-width="4"/>
          <path d="M690 350L720 326L705 326z" fill="#555"/>
          <path d="M520 345L546 326L590 380Q594 404 578 410L560 392z" fill="#e9eaeb" stroke="#222" stroke-width="3"/>
          <path d="M474 396L545 354L560 362L580 396L572 412L514 442z" fill="#1a1b1d"/><path d="M500 382l18 44M520 372l16 32" stroke="#53565a" stroke-width="8"/><path d="M516 436Q520 404 566 392Q572 412 516 436z" fill="#8b9096" stroke="#111" stroke-width="3"/>
          <path d="M0 237L150 237Q250 232 360 196L560 176" fill="none" stroke="#0b0c0d" stroke-width="6"/><path d="M100 236L150 235Q250 230 350 196" fill="none" stroke="#55585c" stroke-width="2"/>
        </svg>
        <svg x="190" y="860" width="120" height="70" viewBox="0 0 360 210" overflow="visible">
          <circle cx="138" cy="132" r="41" fill="#9b9fa7" opacity=".8"/><path d="M138 148l-22-14a24 24 0 0 1 44 0z" fill="#555a60"/>
          <path d="M138 148L94 158" stroke="#0808d8" stroke-width="9"/><circle cx="93" cy="160" r="9" fill="#0808e0"/>
          <path d="M138 148L182 159" stroke="#e80f0f" stroke-width="8"/><circle cx="183" cy="160" r="9" fill="#f00808"/>
          <path d="M138 148V88" stroke="#0fd80f" stroke-width="9"/><path d="M124 90Q138 60 152 90z" fill="#08e808"/>
          <text class="axis" x="129" y="62" fill="#12e012">Y</text><text class="axis" x="64" y="165" fill="#1414e0">Z</text><text class="axis" x="190" y="165" fill="#f01818">X</text>
        </svg>
      </svg>
    </section>

    <footer>
      <div class="cmds">
        <button class="w44"><svg><use href="#b-home"/></svg>원래대로</button>
        <button class="w80"><svg><use href="#b-anim"/></svg>애니메이션</button>
        <button><svg><use href="#b-expl"/></svg>분해</button>
        <button><svg><use href="#b-move"/></svg>이동</button>
        <button><svg><use href="#b-meas"/></svg>측정</button>
        <button><svg><use href="#b-sec"/></svg>단면</button>
      </div>
      <div class="config">Default</div>
      <div class="cmds">
        <button class="w50"><svg><use href="#b-mass"/></svg>질량</button>
        <button class="w50" disabled><svg><use href="#b-mark"/></svg>마크업</button>
        <button class="w58"><svg><use href="#b-3d"/></svg>3D 뷰</button>
        <button><svg><use href="#b-note"/></svg>주석</button>
        <button><svg><use href="#b-part"/></svg>부품</button>
      </div>
    </footer>
  </main>
</div>
</body>
</html>
```
FILE: styles.css
```css
* { box-sizing: border-box; }
body { margin: 0; min-height: 100vh; display: flex; flex-direction: column; background: #fff; color: #1c1c1c; font: 11px/14px "Noto Sans CJK KR", sans-serif; }
button { border: 0; padding: 0; margin: 0; background: none; font: inherit; color: inherit; white-space: nowrap; }
a { color: inherit; text-decoration: none; }
ul, h2 { margin: 0; padding: 0; font: inherit; list-style: none; }
svg { flex: none; }
.sprite { position: absolute; width: 0; height: 0; }
.i8 { width: 8px; height: 8px; }
.i10 { width: 10px; height: 10px; }
.i12 { width: 12px; height: 12px; }
.i14 { width: 14px; height: 14px; }
.i18 { width: 18px; height: 18px; }
.i20 { width: 20px; height: 20px; }
.i24 { width: 24px; height: 26px; padding: 3px; }
.i26 { width: 26px; height: 26px; }
.tri { width: 6px; height: 4px; color: #222; vertical-align: middle; }
.sep { width: 6px; height: 8px; color: #444; }
.tint { color: #9fb0cc; }
.blue { color: #1f7fc4; }

/* Ribbon */
.tabs { display: flex; height: 22px; }
.tab { width: 48px; color: #444; }
.tab.file { height: 20px; margin-right: 0; background: #0063b1; color: #fff; }
.tab.current { width: 34px; border: 1px solid #dadbdc; border-bottom: 0; background: #f5f6f7; }
.tab:nth-child(3) { margin-left: 0; width: 46px; }
.tab:nth-child(4) { width: 44px; }
.help { margin-left: auto; display: flex; align-items: center; gap: 8px; padding-right: 2px; color: #888; }
.help-mark { width: 12px; height: 12px; border-radius: 50%; background: #1177d1; color: #fff; font-weight: 700; font-size: 10px; line-height: 12px; text-align: center; }
.ribbon { display: flex; height: 83px; padding: 2px 0 1px; background: #f5f6f7; border-top: 1px solid #dadbdc; border-bottom: 1px solid #dadbdc; color: #333; }
.group { display: flex; flex-direction: column; border-right: 1px solid #dfe1e3; }
.g-clip { width: 258px; padding-left: 3px; }
.g-org { width: 159px; padding-left: 3px; }
.g-new { width: 120px; padding-left: 3px; }
.g-open { width: 96px; padding-left: 3px; }
.g-sel { width: 101px; padding-left: 6px; }
.tools { display: flex; flex: 1; }
.group h2 { text-align: center; color: #555; line-height: 16px; }
.big { width: 36px; display: block; align-self: flex-start; padding-top: 4px; line-height: 13px; text-align: center; }
.big > svg:first-child { display: block; margin: 0 auto 2px; }
.big.wide { width: 58px; }
.big.mid { width: 44px; }
.off { color: #8b8e92; }
.stack { padding-left: 4px; }
.g-sel .stack { padding-left: 0; }
.small { display: flex; align-items: center; gap: 3px; height: 19px; }
.rule { width: 1px; height: 56px; margin: 0 2px 0 4px; background: #e2e4e6; }

/* Address bar */
.address { display: flex; align-items: center; height: 30px; padding: 0 13px 0 3px; }
.history { display: flex; align-items: center; width: 87px; color: #444; }
.history button { display: flex; justify-content: center; width: 26px; }
.history .slim { width: 17px; }
.history .faint { color: #c4c4c4; }
.crumbs { flex: 1; display: flex; align-items: center; gap: 7px; height: 20px; padding-left: 3px; border: 1px solid #d9d9d9; }
.crumbs > .i14 { margin-right: -3px; }
.crumb-end { margin-left: auto; display: flex; align-items: center; gap: 2px; height: 18px; padding-right: 2px; color: #555; }
.crumb-end i { width: 1px; height: 18px; background: #e0e0e0; }

.body { flex: 1; display: flex; }

/* Folder tree */
.side { width: 193px; padding: 13px 4px 0 0; display: flex; flex-direction: column; gap: 7px; }
.side ul { display: grid; grid-auto-rows: 1fr; }
.rows14 { height: 287px; }
.rows1 { height: 20px; }
.rows11 { height: 225px; }
.rows4 { height: 82px; }
.side li { display: flex; align-items: center; gap: 4px; padding-left: 27px; }
.side li.top { padding-left: 20px; }
.side li svg { width: 14px; height: 14px; }
.side li .pin { width: 9px; height: 9px; margin: 2px 3px 0 auto; color: #8898a8; }
.side .selected { background: #d9d9d9; }

/* File list */
main { flex: 1; min-width: 0; display: flex; flex-direction: column; padding: 0 3px 1px 0; }
.pdm { display: flex; align-items: center; height: 28px; padding: 0 4px 0 5px; border-top: 1px solid #b8b8b8; border-bottom: 1px solid #e8e8e8; }
.pdm > button { margin-right: 6px; }
.logo { margin-right: 7px; }
.pdm-icons { display: flex; align-items: center; }
.pdm-icons button { width: 27px; display: flex; justify-content: center; }
.search { display: flex; align-items: center; width: 217px; height: 19px; margin: 0 8px 0 auto; border: 1px solid #555; }
.search input { flex: 1; min-width: 0; height: 17px; padding: 0 2px; border: 0; font: inherit; color: #222; }
.search input::placeholder { color: #555; opacity: 1; }
.search button { width: 15px; height: 17px; margin-left: 2px; line-height: 8px; background: #ddd; border: 1px solid #777; }
.pdm .end { width: 20px; margin: 0 0 0 4px; display: flex; justify-content: center; }
.list { display: flex; height: 133px; }
.list-view { flex: 1; min-width: 0; overflow: hidden; }
table { width: 100%; table-layout: fixed; border-collapse: collapse; }
.c-name { width: 269px; }
.c-std { width: 85px; }
.c-desc { width: 177px; }
th, td { height: 16px; padding: 0 0 0 5px; line-height: 14px; font-weight: 400; text-align: left; white-space: nowrap; overflow: hidden; border-left: 1px solid #e3eef9; }
th { height: 21px; }
th:first-child, td:first-child { border-left: 0; padding-left: 4px; }
.sort { width: 8px; height: 8px; margin-left: 105px; vertical-align: 6px; color: #666; }
td svg { width: 14px; height: 14px; margin-right: 1px; vertical-align: -3px; }
.vbar { width: 13px; margin-right: -3px; display: flex; flex-direction: column; align-items: center; padding-top: 3px; background: #f0f0f0; color: #444; }
.vbar i { width: 13px; height: 23px; margin-top: 2px; background: #cdcdcd; }
.vbar .foot { margin: auto 0 3px; }
.hbar { display: flex; align-items: center; height: 13px; padding: 0 14px 0 4px; background: #f0f0f0; color: #333; }
.hbar i { width: 482px; height: 13px; margin: 0 auto 0 4px; background: #cdcdcd; }
.hbar svg:first-child { rotate: 180deg; }

/* Panel tabs */
.panels { display: flex; height: 26px; margin: 4px -3px 2px 0; background: #e6eaf4; border-top: 1px solid #a9bccd; border-bottom: 1px solid #ccd6e2; color: #1f3a5c; }
.panels button { display: flex; align-items: center; gap: 5px; padding: 0 6px; }
.panels .active { padding: 0 5px; background: #fff; border: 1px solid #b9c6d6; border-width: 0 1px; border-radius: 3px 3px 0 0; }
.panels .full { margin-left: auto; padding: 0 4px; }

/* Viewer */
.viewer { flex: 1; display: flex; flex-direction: column; background: linear-gradient(#8393a9, #c4c8d4); }
.viewtools { display: flex; align-items: center; justify-content: center; gap: 6px; height: 42px; }
.viewtools button { width: 35px; height: 35px; display: flex; align-items: center; justify-content: center; }
.viewtools button svg { width: 22px; height: 22px; filter: drop-shadow(1px 1px 0 #5d6b7f); }
.viewtools .picked { background: #9aa6b5; border: 1px solid #d5dae1; }
.viewtools .tri { width: 8px; height: 5px; color: #fff; }
.model { display: block; width: 100%; flex: 1; min-height: 0; }
.brand { font: italic 700 38px "Open Sans", sans-serif; fill: #222; }
.brand-o { fill: #6cb33f; }
.axis { font: 36px "Open Sans", sans-serif; }

footer { display: flex; height: 47px; background: #545656; color: #f0f0f0; }
.cmds { display: flex; }
.cmds button { width: 47px; display: flex; flex-direction: column; align-items: center; gap: 2px; padding-top: 5px; }
.cmds button svg { width: 24px; height: 24px; padding: 1px; }
.cmds button:disabled { color: #858686; }
.cmds .w44 { width: 44px; }
.cmds .w50 { width: 51px; }
.cmds .w58 { width: 56px; }
.cmds .w80 { width: 79px; }
.config { flex: 1; display: flex; align-items: center; justify-content: center; border: 1px solid #8b8c8c; border-width: 0 1px; }
```
